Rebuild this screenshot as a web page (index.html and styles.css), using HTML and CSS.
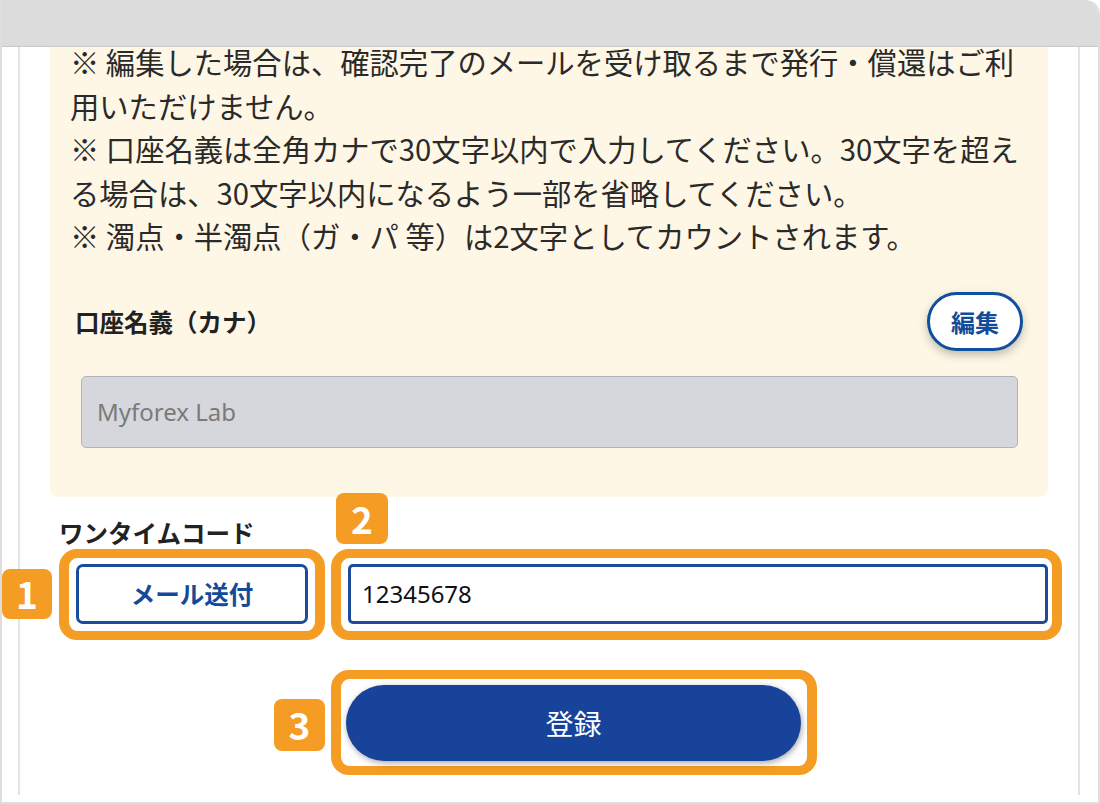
FILE: index.html
```html
<!DOCTYPE html>
<html lang="ja">
<head>
<meta charset="utf-8">
<title>口座名義</title>
<link rel="stylesheet" href="styles.css">
</head>
<body>
<div class="window">
  <div class="titlebar"></div>
  <div class="viewport">
    <div class="column">
      <section class="notice">
        <p class="notes">※ 編集した場合は、確認完了のメールを受け取るまで発行・償還はご利<br>用いただけません。<br>※ 口座名義は全角カナで30文字以内で入力してください。30文字を超え<br>る場合は、30文字以内になるよう一部を省略してください。<br>※ 濁点・半濁点（ガ・パ 等）は2文字としてカウントされます。</p>
        <div class="field-head">
          <span class="field-label">口座名義（カナ）</span>
          <button class="btn-edit" type="button">編集</button>
        </div>
        <div class="readonly-input">Myforex Lab</div>
      </section>
      <section class="otp">
        <div class="otp-label">ワンタイムコード</div>
        <div class="otp-row">
          <div class="hl hl-send"><span class="badge b1">1</span><button class="btn-send" type="button">メール送付</button></div>
          <div class="hl hl-code"><span class="badge b2">2</span><div class="code-input">12345678</div></div>
        </div>
        <div class="submit-row">
          <div class="hl hl-submit"><span class="badge b3">3</span><button class="btn-submit" type="button">登録</button></div>
        </div>
      </section>
    </div>
  </div>
</div>
</body>
</html>
```
FILE: styles.css
```css
* { box-sizing: border-box; margin: 0; padding: 0; }
html, body { width: 1100px; height: 804px; overflow: hidden; background: #fff; }
body { font-family: "Noto Sans CJK JP", "Noto Sans", sans-serif; color: #2a2a2a; }
button { font: inherit; cursor: pointer; }

.window {
  width: 1100px; height: 804px;
  display: flex; flex-direction: column;
  border: 2px solid #dedede; border-top: 0;
  border-top-right-radius: 14px;
  overflow: hidden; background: #fff;
}
.titlebar {
  flex: 0 0 47px;
  background: #dcdcdc;
  border-bottom: 1px solid #c9c9c9;
  border-top-right-radius: 12px;
}
.viewport { flex: 1; overflow: hidden; padding: 0 18px 0 16px; }
.column {
  height: 100%;
  border-left: 2px solid #e4e4e4;
  border-right: 2px solid #e4e4e4;
}

.notice {
  margin: -7px 30px 0;
  background: #fff7e6;
  border-radius: 0 0 8px 8px;
  padding: 0 14px 49px 20px;
}
.notes { font-size: 29.3px; line-height: 43.5px; color: #2a2a2a; }

.field-head {
  margin-top: 34px;
  margin-right: 6px;
  display: flex; justify-content: space-between; align-items: center;
  padding: 0 5px 0 5px;
}
.field-label { font-size: 24.5px; font-weight: 700; color: #222; }
.btn-edit {
  width: 96px; height: 59px;
  border: 3px solid #0e4f9f; border-radius: 30px;
  background: #fff; color: #134a99;
  font-size: 24px; font-weight: 700;
  box-shadow: 0 4px 10px rgba(0, 0, 0, 0.25);
}
.readonly-input {
  margin: 25px 16px 0 11px;
  height: 72px;
  background: #d6d7dc;
  border: 1.5px solid #b3b4ba; border-radius: 5px;
  padding-left: 15px;
  display: flex; align-items: center;
  font-family: "Noto Sans", sans-serif; font-size: 24px; color: #7a7a7a;
}

.otp { padding: 0 16px 0 39px; }
.otp-label { margin-top: 20px; font-size: 24.5px; line-height: 32px; font-weight: 700; color: #222; }
.otp-row { display: flex; gap: 6px; }

.hl {
  position: relative;
  border-style: solid; border-color: #f49c24; border-width: 9px 10px;
  border-radius: 18px;
  background: #fff;
}
.hl-send { flex: 0 0 266px; padding: 6px 7px 7px 7px; }
.hl-code { flex: 1; padding: 6px 4px 7px 7px; }
.hl-submit { width: 486px; padding: 6px 6px 5px 5px; }

.badge {
  position: absolute; z-index: 2;
  width: 50px; height: 50px;
  background: #f49c24; border-radius: 8px;
  color: #fff; font-size: 37px; font-weight: 700; line-height: 1;
  display: flex; align-items: center; justify-content: center;
}
.b1 { left: -67px; top: 11px; }
.b2 { left: -5px; top: -65px; width: 52px; height: 51px; }
.b3 { left: -67px; top: 20px; width: 51px; height: 52px; }

.btn-send {
  display: block; width: 100%; height: 60px;
  border: 3px solid #1a4c9e; border-radius: 7px;
  background: #fff; color: #134a99;
  font-size: 24.5px; font-weight: 700;
}
.code-input {
  height: 60px;
  border: 3px solid #1d4a9b; border-radius: 5px;
  padding-left: 11px;
  display: flex; align-items: center;
  font-family: "Noto Sans", sans-serif; font-size: 24px; color: #111;
}

.submit-row { margin-top: 30px; padding-left: 272px; display: flex; }
.btn-submit {
  display: block; width: 100%; height: 76px;
  border: 0; border-radius: 38px;
  background: #17449a; color: #fff;
  font-size: 28px;
  box-shadow: 1px 2px 6px rgba(0, 0, 0, 0.35);
}
```
